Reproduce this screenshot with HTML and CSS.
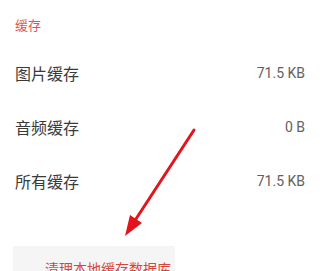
FILE: index.html
```html
<!DOCTYPE html>
<html lang="zh">
<head>
<meta charset="utf-8">
<link rel="stylesheet" href="styles.css">
</head>
<body>
<div class="page">
  <div class="section-label">缓存</div>
  <div class="rows">
    <div class="row"><span class="title">图片缓存</span><span class="value">71.5 KB</span></div>
    <div class="row"><span class="title">音频缓存</span><span class="value">0 B</span></div>
    <div class="row"><span class="title">所有缓存</span><span class="value">71.5 KB</span></div>
  </div>
  <div class="clear-box"><span class="clear-text">清理本地缓存数据库</span></div>
  <svg class="arrow" width="324" height="271" viewBox="0 0 324 271">
    <line x1="194" y1="130" x2="134" y2="222" stroke="#e3141b" stroke-width="3" stroke-linecap="round"/>
    <polygon points="125,236 130,215 142,223" fill="#e3141b"/>
  </svg>
</div>
</body>
</html>
```

FILE: styles.css
```css
html, body {
  margin: 0;
  padding: 0;
  background: #ffffff;
}
.page {
  position: relative;
  width: 324px;
  height: 271px;
  overflow: hidden;
  font-family: "Noto Sans CJK SC", "Noto Sans", sans-serif;
}
.section-label {
  padding: 15px 0 0 15px;
  height: 20px;
  line-height: 20px;
  font-size: 13px;
  color: #e0574f;
}
.rows {
  margin-top: 11px;
  display: flex;
  flex-direction: column;
}
.row {
  height: 54px;
  display: flex;
  align-items: center;
  justify-content: space-between;
  padding: 0 19px 0 15px;
}
.title {
  font-size: 16px;
  color: #3a3a3a;
  line-height: 22px;
}
.value {
  font-family: Roboto, "Noto Sans", sans-serif;
  font-size: 14px;
  color: #626262;
}
.clear-box {
  margin: 38px 0 0 13px;
  width: 162px;
  height: 40px;
  background: #f5f5f5;
  padding: 9px 0 0 32px;
  box-sizing: border-box;
  white-space: nowrap;
}
.clear-text {
  font-size: 14px;
  line-height: 20px;
  color: #d8453c;
}
.arrow {
  position: absolute;
  left: 0;
  top: 0;
  pointer-events: none;
}
```
